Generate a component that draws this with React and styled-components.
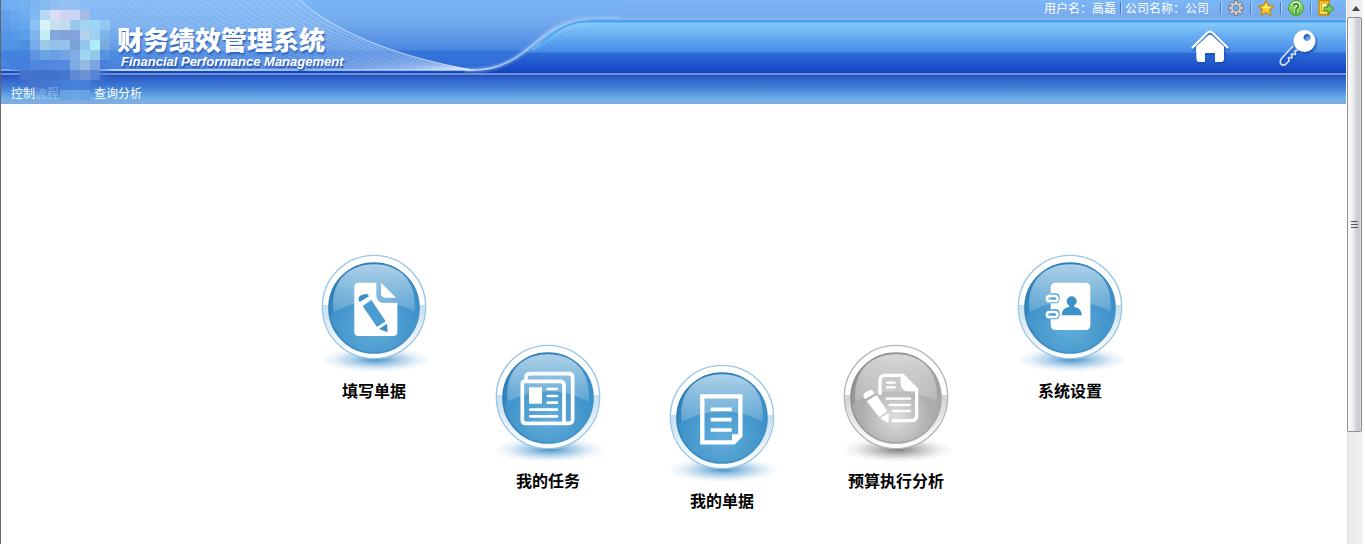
import React from 'react';
import styled, { createGlobalStyle } from 'styled-components';

const GlobalStyle = createGlobalStyle`
  * { box-sizing: border-box; }
  body {
    margin: 0;
    background: #fff;
    font: 12px/16px "Noto Sans CJK SC", sans-serif;
    color: #000;
  }
  a { color: inherit; text-decoration: none; }
  svg { display: block; }
`;

const Page = styled.div`
  display: flex;
  min-height: 100vh;
`;

const Content = styled.div`
  flex: 1;
  min-width: 0;
  border-left: 1px solid #666;
`;

const Header = styled.header`
  position: relative;
  color: #fff;
`;

const Banner = styled.div`
  position: relative;
  display: flex;
  justify-content: space-between;
  height: 75px;
  background: linear-gradient(
    #7ab6f6 0, #78aaee 16px, #86b2ea 18px, #8ab6ea 20px,
    #48a2f0 20px, #48a2f0 22px, #84c8fb 23px, #468ce6 52px,
    #2c6cd8 53px, #1442bf 73px, #6a94de 73px, #6a94de 75px
  );
`;

const SwooshArt = styled.svg`
  position: absolute;
  left: 0;
  top: 0;
`;

const Mosaic = styled.svg`
  position: absolute;
  left: -1px;
  top: 0;
  pointer-events: none;
`;

const Brand = styled.div`
  position: relative;
  padding: 20px 0 0 116px;
  white-space: nowrap;
`;

const Title = styled.h1`
  margin: 0;
  font-size: 26px;
  font-weight: 900;
  line-height: 38px;
  height: 34px;
  text-shadow: 1px 2px 2px #2c62b8;
`;

const Subtitle = styled.p`
  margin: 0;
  padding-left: 4px;
  font: italic bold 13px/16px "Liberation Sans", sans-serif;
  text-shadow: 1px 2px 1px #2354b4;
`;

const Tools = styled.div`
  position: relative;
  display: flex;
  flex-direction: column;
  align-items: flex-end;
`;

const UserBar = styled.div`
  display: flex;
  align-items: center;
  height: 16px;
  padding-right: 11px;
  white-space: nowrap;
`;

const Divider = styled.span`
  width: 2px;
  height: 12px;
  margin: 0 ${(p) => p.$gap || 0}px 0 ${(p) => p.$before || 0}px;
  border-left: 1px solid #3f78d0;
  border-right: 1px solid #b4d8fa;
`;

const IconButton = styled.button`
  display: block;
  padding: 0;
  border: 0;
  background: none;
  cursor: pointer;
`;

const Shortcuts = styled.div`
  display: flex;
  gap: 48px;
  padding: 10px 28px 0 0;
`;

const Nav = styled.nav`
  display: flex;
  gap: 35px;
  height: 29px;
  padding: 10px 10px 0;
  background: linear-gradient(
    #2c4f9f 0, #2b5bc8 2px, #4380d6 13px, #72b6ea 25px,
    #86a4dc 25px, #86a4dc 26px, #7ab2e6 27px, #74ace0 29px
  );
`;

const NavLink = styled.a`
  position: relative;
  z-index: 1;
`;

const Faded = styled.span`
  opacity: 0.35;
`;

const Launcher = styled.main`
  display: grid;
  grid-template-columns: repeat(5, 174px);
  justify-content: center;
  align-items: start;
  padding: 141px 0 0 97px;
`;

const Tile = styled.a`
  display: flex;
  flex-direction: column;
  align-items: center;
  gap: 5px;
  margin-top: ${(p) => p.$drop}px;
  font-size: 16px;
  font-weight: 700;
  line-height: 20px;
`;

const ScrollRail = styled.div`
  display: flex;
  flex-direction: column;
  width: 19px;
  background: linear-gradient(90deg, #fff 1px, #e2e2e2 1px, #ececec 4px, #f0f0f0 15px, #fff 18px);
`;

const ScrollArrow = styled.span`
  display: flex;
  justify-content: center;
  align-items: center;
  height: 17px;
`;

const ScrollThumb = styled.div`
  flex: 415;
  display: flex;
  align-items: center;
  justify-content: center;
  margin: 0 3px 0 1px;
  border: 1px solid #8f8f8f;
  border-radius: 2px;
  background: linear-gradient(90deg, #fafafa 0, #eeeef0 5px, #dadade 7px, #c8c8cf 11px, #dedee2 13px);
`;

const ScrollSpace = styled.div`
  flex: 112;
`;

const mosaicRows = [
  ['#62a6ee', '#68aaee', '#72b0f0', '#7cb4f2', '#86baf2', '#90bef2', '#96c0f2', '#94c0f4', '#8cbef4', '', '', ''],
  ['#5298e8', '#5fa0e9', '#6cacf0', '#80b8f4', '#b8daf6', '#dedff4', '#d4d4f0', '#cfd5f2', '#a7bde5', '#84b8f4', '', ''],
  ['#4e96e4', '#559ce8', '#60a8ee', '#8cc2f4', '#dcf5f9', '#cde0ee', '#c6dcea', '#9acaec', '#a4d6f0', '#9cd8f2', '#98d2f2', ''],
  ['#468ee4', '#4c94e6', '#5a9ee8', '#82b4ee', '#c8f2f8', '#86a6d8', '#86a2d8', '#88a4dc', '#b8d2ee', '#a0d0f0', '#80b8ea', ''],
  ['#4a90e2', '#4c90e2', '#4c90e2', '#78aeec', '#a0cdea', '#98c6ea', '#98c4ee', '#7ba4d6', '#9ac8ee', '#b2f2f8', '#80b2da', ''],
  ['#3f82de', '#3f82de', '#4384de', '#6096e2', '#6ca6e4', '#6ca0e2', '#78a6e6', '#86b0ec', '#a4daf0', '#96cce8', '#5c98e2', ''],
  ['', '#437fdb', '#467fdb', '#5088dc', '#5088dc', '#548ade', '#568cde', '#7cb0e4', '#9abee0', '#7ea8e0', '', ''],
  ['', '', '#4474cc', '#4272ca', '#4070c8', '#4272c8', '#4676ce', '#6289d0', '#7092d4', '#5a86d6', '', ''],
  ['', '', '', '#4074d0', '#4276d2', '#447ad4', '#4480da', '#4884dc', '#4480da', '', '', ''],
  ['', '', '', '', '', '', '#68a4e4', '#6ca6e6', '#68a4e4', '', '', ''],
];

const meshLines = Array.from({ length: 34 }, (_, i) => i);

function Swoosh() {
  return (
    <SwooshArt width="620" height="75" viewBox="1 0 620 75" aria-hidden="true">
      <defs>
        <linearGradient id="sky" x2="0" y2="1">
          <stop offset="0" stopColor="#7ab6f6" />
          <stop offset=".35" stopColor="#70a8ec" />
          <stop offset=".7" stopColor="#4a86e0" />
          <stop offset=".72" stopColor="#3576da" />
          <stop offset="1" stopColor="#2c6ad6" />
        </linearGradient>
        <linearGradient id="rim" gradientUnits="userSpaceOnUse" x1="450" y1="0" x2="620" y2="0">
          <stop offset="0" stopColor="#dbe9fb" />
          <stop offset=".6" stopColor="#a7cbf4" />
          <stop offset="1" stopColor="#8ab6ea" />
        </linearGradient>
        <linearGradient id="meshFade" gradientUnits="userSpaceOnUse" x1="90" y1="0" x2="460" y2="0">
          <stop offset="0" stopColor="#fff" stopOpacity=".1" />
          <stop offset=".5" stopColor="#fff" stopOpacity=".24" />
          <stop offset="1" stopColor="#fff" stopOpacity=".5" />
        </linearGradient>
        <linearGradient id="baseLine" gradientUnits="userSpaceOnUse" x1="0" y1="0" x2="500" y2="0">
          <stop offset="0" stopColor="#8fb8f0" />
          <stop offset=".3" stopColor="#fff" />
          <stop offset=".6" stopColor="#a8c8f4" />
          <stop offset="1" stopColor="#c0d8f6" />
        </linearGradient>
        <clipPath id="meshClip">
          <path d="M0 0H300C334 32 400 58 474 70H0Z" />
        </clipPath>
        <filter id="soft"><feGaussianBlur stdDeviation="1" /></filter>
      </defs>
      <path d="M0 0H621V20H590C548 21 538 46 512 60C499 67 487 71 470 71H0Z" fill="url(#sky)" />
      <g clipPath="url(#meshClip)">
        <path d="M0 0H300C334 32 400 58 474 70H0Z" fill="#b2dcff" opacity=".2" />
        {meshLines.map((i) => (
          <path
            key={i}
            d={`M${300 - i * 8} 0C${334 - i * 7} ${32 + i} ${400 - i * 4} ${58 + i} 474 70`}
            fill="none"
            stroke="url(#meshFade)"
            strokeWidth=".7"
          />
        ))}
        {meshLines.map((i) => (
          <path key={i} d={`M${i * 10} 0L${90 + i * 14} 75`} stroke="#e6f4ff" strokeWidth=".5" opacity=".16" />
        ))}
      </g>
      <path d="M300 0C334 32 400 58 474 70" fill="none" stroke="#d8eafd" strokeWidth="1" opacity=".8" />
      <path d="M0 70H474" stroke="url(#baseLine)" strokeWidth="1.5" />
      <path d="M0 71.500H474" stroke="#1c4db4" strokeWidth="1" />
      <path d="M465 70C487 71 499 67 512 60C538 46 548 20 590 18H621" fill="none" stroke="#a8caf4" strokeWidth="4" opacity=".5" filter="url(#soft)" />
      <path d="M532 50C548 40 564 24 594 24" fill="none" stroke="#84c8fb" strokeWidth="3" opacity=".6" filter="url(#soft)" />
      <path d="M465 70C487 71 499 67 512 60C538 46 548 21 590 20" fill="none" stroke="url(#rim)" strokeWidth="1.300" opacity=".85" />
      <path d="M540 45C554 32 566 21 592 21H621" fill="none" stroke="#48a2f0" strokeWidth="1.500" />
    </SwooshArt>
  );
}

function PixelEmblem() {
  return (
    <Mosaic width="130" height="104" viewBox="0 0 130 104" aria-hidden="true">
      <defs>
        <radialGradient id="emblemHalo">
          <stop offset=".6" stopColor="#4278d2" stopOpacity=".9" />
          <stop offset="1" stopColor="#4278d2" stopOpacity="0" />
        </radialGradient>
      </defs>
      <ellipse cx="62" cy="66" rx="52" ry="34" fill="url(#emblemHalo)" />
      <g shapeRendering="crispEdges">
        {mosaicRows.map((row, y) =>
          row.map((fill, x) => fill && (
            <rect key={`${x}-${y}`} x={x * 10} y={y * 10} width="10" height="10" fill={fill} opacity={x < 2 || x > 9 ? 0.7 : 0.95} />
          )),
        )}
        <rect width="1" height="104" fill="#666" />
      </g>
    </Mosaic>
  );
}

const GearIcon = () => (
  <svg width="18" height="16" viewBox="0 0 18 16">
    <g stroke="#7d838d" strokeWidth="4">
      <path d="M9 0V16M1 8H17M3.300 2.300L14.700 13.700M14.700 2.300L3.300 13.700" />
    </g>
    <g stroke="#cfd1d4" strokeWidth="2">
      <path d="M9 1V15M2 8H16M4 3L14 13M14 3L4 13" />
    </g>
    <circle cx="9" cy="8" r="5" fill="#d0d1d4" />
    <circle cx="9" cy="8" r="2.900" fill="#75abf0" stroke="#7d838d" />
  </svg>
);

const StarIcon = () => (
  <svg width="18" height="16" viewBox="0 0 18 16">
    <path d="M9 .8L11.300 5.500L16.700 6.100L12.700 9.800L13.700 15.200L9 12.600L4.300 15.200L5.300 9.800L1.300 6.100L6.700 5.500Z" fill="#ffcf22" stroke="#c78a12" strokeWidth="1.300" strokeLinejoin="round" />
    <path d="M9 3L10.400 6.600L14.300 7L11 8.500L7 8L4 7L7.500 6.500Z" fill="#ffec7a" />
  </svg>
);

const HelpIcon = () => (
  <svg width="18" height="16" viewBox="0 0 18 16">
    <defs>
      <linearGradient id="leaf" x2="0" y2="1"><stop stopColor="#b7e98c" /><stop offset="1" stopColor="#55b82e" /></linearGradient>
    </defs>
    <circle cx="9" cy="8" r="7.500" fill="url(#leaf)" stroke="#4fa233" />
    <path d="M6.500 6C6.500 3 11.700 3.200 11.500 6C11.400 7.700 9 7.700 9 9.500M9 11V13" fill="none" stroke="#fff" strokeWidth="3.400" />
    <path d="M6.500 6C6.500 3 11.700 3.200 11.500 6C11.400 7.700 9 7.700 9 9.700M9 11V13" fill="none" stroke="#2a7c1d" strokeWidth="1.800" />
  </svg>
);

const ExitIcon = () => (
  <svg width="18" height="16" viewBox="0 0 18 16">
    <path d="M2 .8H12V14.800H2Z" fill="#ffd83b" stroke="#cb8b00" strokeWidth="1.400" />
    <path d="M4.500 3H10V11H4.500Z" fill="#fff09a" stroke="#d59c12" />
    <path d="M7 7.200H11V4.200L16.800 9L11 13.800V10.800H7Z" fill="#7ed04c" stroke="#3d8e22" strokeLinejoin="round" />
  </svg>
);

const Shaded = styled.svg`
  filter: drop-shadow(1px 2px 1px #1b50b4);
`;

const HomeIcon = () => (
  <Shaded width="40" height="44" viewBox="0 0 40 44">
    <path d="M2.500 21.500L17 7Q20 4 23 7L37.500 21.500" fill="none" stroke="#fff" strokeWidth="2.200" strokeLinecap="round" />
    <path d="M6 20.500L18 9.500Q20 8 22 9.500L34 20.500V33Q34 36 31 36H25V27H15V36H9Q6.500 36 6.500 33Z" fill="#fff" />
  </Shaded>
);

const KeyIcon = () => (
  <Shaded width="40" height="44" viewBox="0 0 40 44">
    <path fillRule="evenodd" d="M26.500 4A11 11 0 1 1 26.400 4ZM29 8A3.500 3.500 0 1 0 29.100 8Z" fill="#fff" />
    <path d="M15 20L4 32C0 37 4 41 8 38L11 35L10.500 31.500L14 32L13.500 28L17.500 28.500L17 25L20 24" fill="none" stroke="#d2e0f8" strokeWidth="1.700" strokeLinejoin="round" />
  </Shaded>
);

const blueTones = {
  id: 'blue', line: '#98c6e5', ring: '#c5dff0', rim: '#2a79b1', edge: '#358dc8', mid: '#4798cd', glow: '#62aedb', shadow: '#3e8fca',
};
const grayTones = {
  id: 'gray', line: '#b4b4b4', ring: '#d2d2d2', rim: '#888', edge: '#9d9d9d', mid: '#b0b0b0', glow: '#dedede', shadow: '#777',
};

function Orb({ tones, children }) {
  const t = tones;
  return (
    <svg width="130" height="130" viewBox="0 0 390 390" aria-hidden="true">
      <defs>
        <radialGradient id={`${t.id}Shadow`}>
          <stop stopColor={t.shadow} stopOpacity=".95" />
          <stop offset=".4" stopColor={t.shadow} stopOpacity=".45" />
          <stop offset=".75" stopColor={t.shadow} stopOpacity=".12" />
          <stop offset="1" stopColor={t.shadow} stopOpacity="0" />
        </radialGradient>
        <linearGradient id={`${t.id}Ring`} x2="0" y2="1">
          <stop stopColor={t.ring} />
          <stop offset="1" stopColor="#fff" />
        </linearGradient>
        <radialGradient id={`${t.id}Body`} cx=".5" cy=".72" r=".62">
          <stop stopColor={t.glow} />
          <stop offset=".6" stopColor={t.mid} />
          <stop offset="1" stopColor={t.edge} />
        </radialGradient>
        <linearGradient id={`${t.id}Gloss`} x2="0" y2="1">
          <stop stopColor="#fff" stopOpacity=".6" />
          <stop offset="1" stopColor="#fff" stopOpacity=".16" />
        </linearGradient>
        <linearGradient id={`${t.id}Rim`} x2="1" y2="1">
          <stop stopColor={t.rim} />
          <stop offset="1" stopColor={t.mid} />
        </linearGradient>
      </defs>
      <ellipse cx="200" cy="344" rx="168" ry="38" fill={`url(#${t.id}Shadow)`} />
      <circle cx="195" cy="186" r="155" fill="#fff" />
      <path d="M40 180A155 155 0 0 0 350 180Z" fill={`url(#${t.id}Ring)`} />
      <circle cx="195" cy="186" r="155" fill="none" stroke={t.line} strokeWidth="4" />
      <circle cx="195" cy="189" r="135" fill={`url(#${t.id}Body)`} stroke={`url(#${t.id}Rim)`} strokeWidth="5" />
      <path d="M62 210A134 134 0 0 1 195 56A128 128 0 0 0 73 200Z" fill={t.rim} opacity=".5" />
      <path d="M74 200C62 110 118 58 195 58C272 58 328 110 316 200Q200 138 74 200Z" fill={`url(#${t.id}Gloss)`} />
      {children}
    </svg>
  );
}

const WriteGlyph = () => (
  <g>
    <path d="M148 113H202V150Q202 173 225 173H265V261Q265 273 253 273H148Q136 273 136 261V125Q136 113 148 113Z" fill="#fff" />
    <path d="M216 113L261 158H229Q216 158 216 145Z" fill="#fff" />
    <path d="M149 158Q153 150 166 148Q176 145 180 154L152 171Q147 165 149 158Z" fill="#3c90c5" />
    <path d="M161 183L187 165L230 229L204 246Z" fill="#4a9bcf" />
    <path d="M210 252L234 236L236 262Z" fill="#398fc7" />
  </g>
);

const NewsGlyph = () => (
  <g fill="none" stroke="#fff" strokeWidth="11" strokeLinejoin="round" strokeLinecap="round">
    <path d="M129 132V128Q129 116 141 116H257Q269 116 269 128V253Q269 265 257 265H244" />
    <path d="M125 139H231Q243 139 243 151V265H129Q118 265 118 254V146Q118 139 125 139Z" />
    <path d="M138 157H177V206H138Z" fill="#fff" stroke="none" />
    <path d="M194 162H222M194 183H222M194 203H222M142 224H222M142 244H222" strokeWidth="8" />
  </g>
);

const PaperGlyph = () => (
  <g fill="none" stroke="#fff" strokeWidth="13">
    <path d="M136 124H250V242L230 262H136Z" />
    <path d="M225 264V238H252V247L235 266Z" fill="#fff" stroke="none" />
    <path d="M161 163H224M161 194H224M161 225H224" strokeWidth="11" />
  </g>
);

const ReportGlyph = () => (
  <g fill="none" stroke="#fff" strokeLinejoin="round" strokeLinecap="round">
    <path d="M147 176V138Q147 121 162 121H216L257 163V239Q257 257 240 257H187" strokeWidth="10" />
    <path d="M211 122V144Q211 167 234 167H256L212 120Z" fill="#fff" strokeWidth="4" />
    <path d="M168 143H191M168 157H191M167 191H237M176 210H237M185 228H237" strokeWidth="7" />
    <path d="M97 181Q98 171 119 164Q126 164 130 176L103 192Q96 187 97 181Z" fill="#fff" stroke="none" />
    <path d="M107 199L137 180L169 228L145 247Z" fill="#fff" stroke="none" />
    <path d="M150 249L172 235L171 261Z" fill="#fff" strokeWidth="3" />
  </g>
);

const ContactsGlyph = () => (
  <g>
    <rect x="137" y="113" width="119" height="142" rx="14" fill="#fff" />
    <path d="M137 145H152Q164 145 164 160Q164 175 152 175H137Z" fill="#58a5d6" />
    <path d="M137 193H152Q164 193 164 208Q164 223 152 223H137Z" fill="#4698cd" />
    <rect x="126" y="153" width="31" height="15" rx="7" fill="none" stroke="#fff" strokeWidth="8" />
    <rect x="126" y="201" width="31" height="15" rx="7" fill="none" stroke="#fff" strokeWidth="8" />
    <circle cx="200" cy="169" r="15" fill="#3c91c8" />
    <path d="M170 211Q171 188 192 186L193 178H207L208 186Q229 189 231 211Z" fill="#3c91c8" />
  </g>
);

const tiles = [
  { label: '填写单据', drop: 0, tones: blueTones, Glyph: WriteGlyph },
  { label: '我的任务', drop: 90, tones: blueTones, Glyph: NewsGlyph },
  { label: '我的单据', drop: 110, tones: blueTones, Glyph: PaperGlyph },
  { label: '预算执行分析', drop: 90, tones: grayTones, Glyph: ReportGlyph },
  { label: '系统设置', drop: 0, tones: blueTones, Glyph: ContactsGlyph },
];

export default function App() {
  return (
    <Page>
      <GlobalStyle />
      <Content>
        <Header>
          <Banner>
            <Swoosh />
            <Brand>
              <Title>财务绩效管理系统</Title>
              <Subtitle>Financial Performance Management</Subtitle>
            </Brand>
            <Tools>
              <UserBar>
                <span>用户名：高磊</span>
                <Divider $before={4} $gap={3} />
                <span>公司名称：公司</span>
                <Divider $before={11} $gap={5} />
                <IconButton aria-label="设置"><GearIcon /></IconButton>
                <Divider $before={5} $gap={5} />
                <IconButton aria-label="收藏"><StarIcon /></IconButton>
                <Divider $before={5} $gap={5} />
                <IconButton aria-label="帮助"><HelpIcon /></IconButton>
                <Divider $before={5} $gap={5} />
                <IconButton aria-label="退出"><ExitIcon /></IconButton>
              </UserBar>
              <Shortcuts>
                <IconButton aria-label="首页"><HomeIcon /></IconButton>
                <IconButton aria-label="密码"><KeyIcon /></IconButton>
              </Shortcuts>
            </Tools>
          </Banner>
          <Nav>
            <NavLink href="#flow">控制<Faded>流程</Faded></NavLink>
            <NavLink href="#query">查询分析</NavLink>
          </Nav>
          <PixelEmblem />
        </Header>
        <Launcher>
          {tiles.map(({ label, drop, tones, Glyph }) => (
            <Tile key={label} href="#open" $drop={drop}>
              <Orb tones={tones}><Glyph /></Orb>
              <span>{label}</span>
            </Tile>
          ))}
        </Launcher>
      </Content>
      <ScrollRail aria-hidden="true">
        <ScrollArrow>
          <svg width="8" height="5" viewBox="0 0 8 5"><path d="M4 0L8 5H0Z" fill="#444" /></svg>
        </ScrollArrow>
        <ScrollThumb>
          <svg width="8" height="9" viewBox="0 0 8 9" shapeRendering="crispEdges"><path d="M0 1.500H7M0 4.500H7M0 7.500H7" stroke="#555" strokeWidth="1" /></svg>
        </ScrollThumb>
        <ScrollSpace />
      </ScrollRail>
    </Page>
  );
}
